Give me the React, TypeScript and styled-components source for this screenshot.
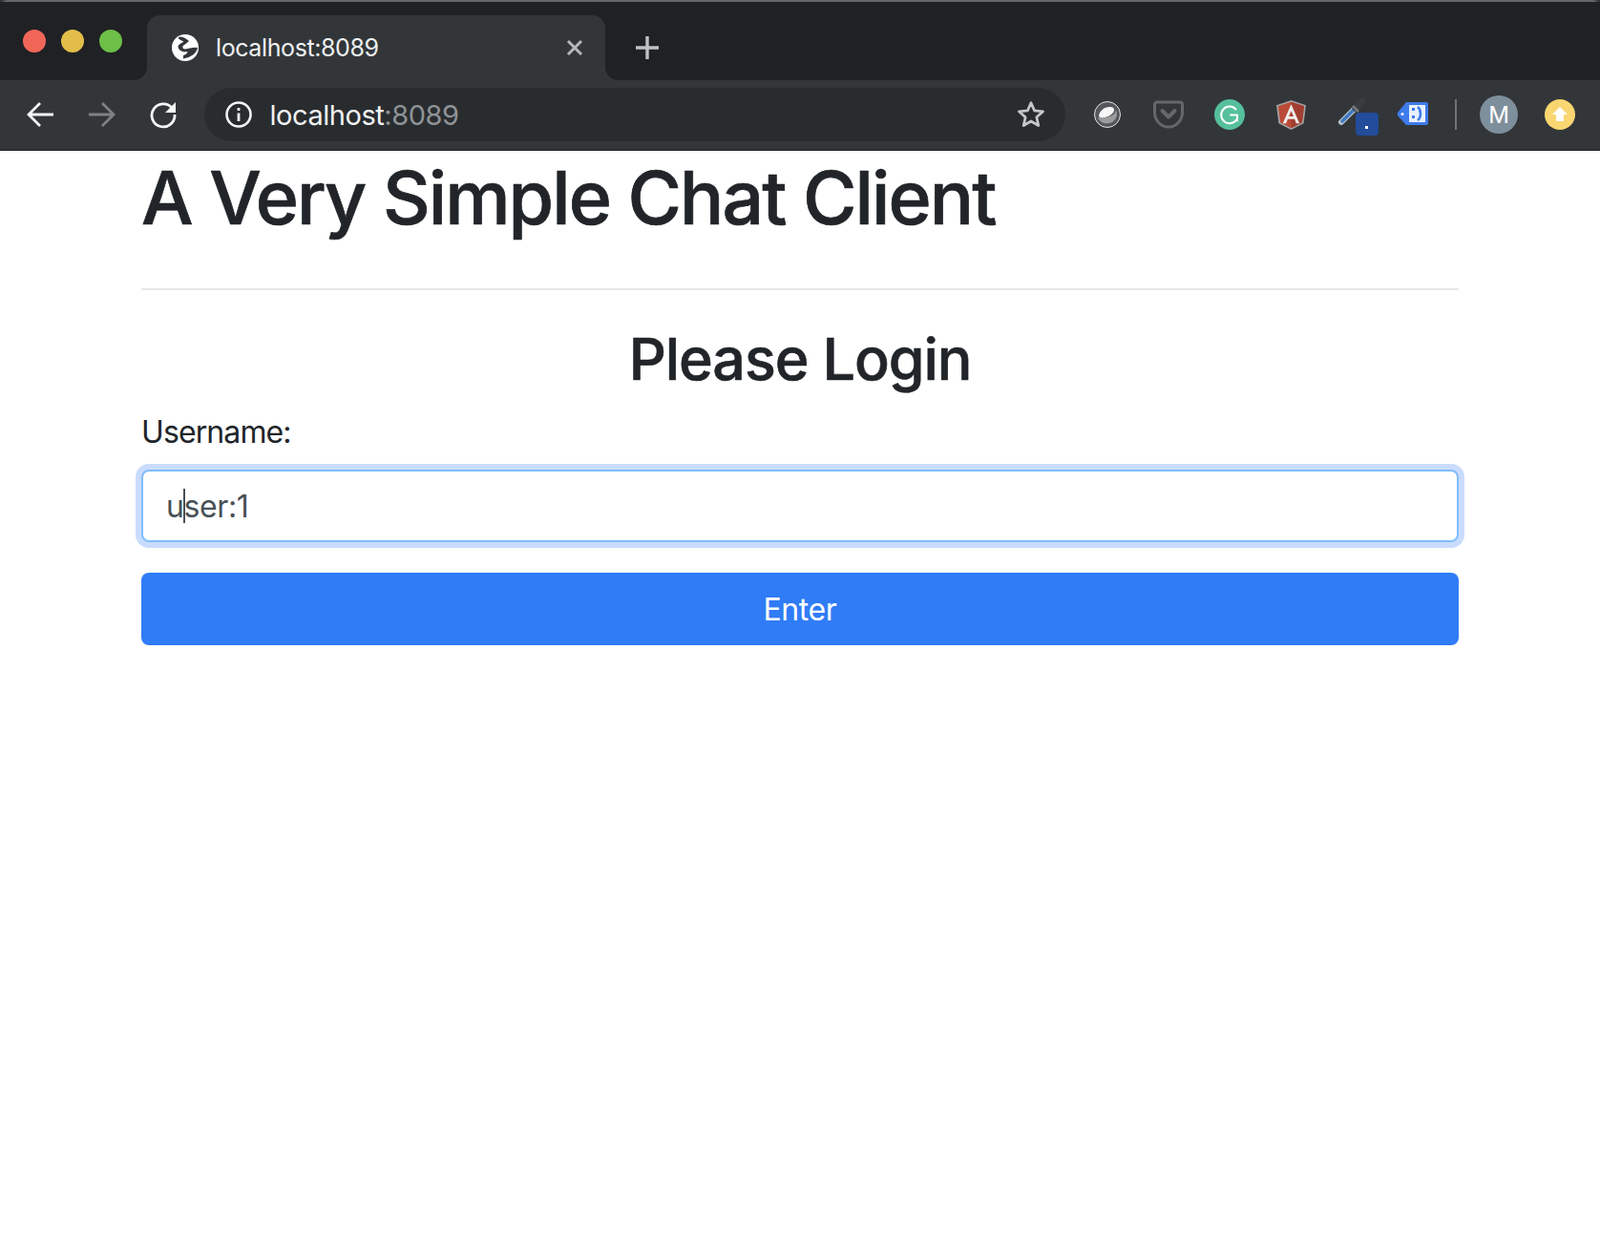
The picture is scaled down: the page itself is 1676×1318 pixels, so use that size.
import React from 'react'
import styled, { createGlobalStyle } from 'styled-components'

const GlobalStyle = createGlobalStyle`
  html, body {
    margin: 0;
    padding: 0;
    background: #ffffff;
  }
  * {
    box-sizing: border-box;
  }
`

const Window = styled.div`
  width: 1676px;
  height: 1318px;
  background: #fff;
  font-family: Inter, 'Noto Sans', sans-serif;
  overflow: hidden;
`

const Chrome = styled.header`
  height: 158px;
  background: #323639;
  border-bottom: 1px solid #1f2124;
`

const TabStrip = styled.div`
  display: flex;
  height: 84px;
  border-top: 2px solid #65676a;
  border-radius: 8px 8px 0 0;
  background: #323639;
`

const Lights = styled.div`
  width: 154px;
  display: flex;
  gap: 16px;
  padding: 29px 0 0 24px;
  background: #202124;
  border-bottom-right-radius: 14px;
`

const Light = styled.span<{ $color: string }>`
  width: 24px;
  height: 24px;
  border-radius: 50%;
  background: ${p => p.$color};
`

const TabSlot = styled.div`
  width: 480px;
  padding-top: 14px;
  background: #202124;
`

const Tab = styled.div`
  height: 68px;
  display: flex;
  align-items: center;
  padding: 0 22px 0 26px;
  background: #323639;
  border-radius: 14px 14px 0 0;
  color: #eef0f1;
  font-size: 25px;
`

const TabTitle = styled.span`
  flex: 1;
  margin-left: 18px;
  letter-spacing: -0.4px;
`

const StripRest = styled.div`
  flex: 1;
  padding: 35px 0 0 31px;
  background: #202124;
  border-bottom-left-radius: 14px;
`

const Toolbar = styled.div`
  height: 72px;
  display: flex;
  align-items: center;
  padding-left: 28px;
`

const NavIcon = styled.svg<{ $nudge?: number }>`
  width: 30px;
  height: 30px;
  margin-left: ${p => p.$nudge ?? 0}px;
  margin-right: ${p => 33 - (p.$nudge ?? 0)}px;
  flex: none;
`

const AddressBar = styled.div`
  width: 902px;
  height: 56px;
  margin-left: -3px;
  display: flex;
  align-items: center;
  padding: 0 20px 0 21px;
  background: #292c2f;
  border-radius: 28px;
  font-size: 29px;
  color: #f1f3f4;
`

const Url = styled.span`
  flex: 1;
  margin-left: 17.5px;
  letter-spacing: -0.45px;
`

const Port = styled.span`
  color: #8f9396;
`

const Extensions = styled.div`
  flex: 1;
  display: flex;
  align-items: center;
  padding-left: 12px;
`

const ExtSlot = styled.div`
  position: relative;
  width: 64px;
  height: 44px;
  display: flex;
  align-items: center;
  justify-content: center;
  flex: none;
`

const Badge = styled.span`
  position: absolute;
  left: 36px;
  top: 20px;
  width: 24px;
  height: 24px;
  border-radius: 4px;
  background: #234c9b;
  &::after {
    content: '';
    position: absolute;
    left: 10px;
    top: 14px;
    width: 3px;
    height: 3px;
    background: #fff;
  }
`

const Separator = styled.span`
  width: 2px;
  height: 32px;
  margin: 0 0 0 12px;
  background: #6f7275;
`

const Avatar = styled.div`
  width: 40px;
  height: 40px;
  margin-left: 24px;
  border-radius: 50%;
  background: #7e8f9c;
  color: #fff;
  font-size: 24px;
  display: flex;
  align-items: center;
  justify-content: center;
`

const UpdateDot = styled.div`
  width: 32px;
  height: 32px;
  margin-left: 28px;
  border-radius: 50%;
  background: #f9d671;
  display: flex;
  align-items: center;
  justify-content: center;
`

const Page = styled.main`
  width: 1380px;
  margin: 0 auto;
  color: #212529;
`

const Title = styled.h1`
  margin: 0;
  height: 144px;
  padding-top: 3px;
  font-size: 77px;
  line-height: 92px;
  font-weight: 500;
  letter-spacing: -1.95px;
  -webkit-text-stroke: 0.7px #212529;
`

const Rule = styled.hr`
  margin: 0;
  border: 0;
  border-top: 2px solid #e6e7e8;
`

const Subtitle = styled.h2`
  margin: 33px 0 0;
  text-align: center;
  font-size: 61px;
  line-height: 78px;
  font-weight: 500;
  letter-spacing: -1.1px;
  -webkit-text-stroke: 0.6px #212529;
`

const Label = styled.label`
  display: block;
  margin-top: 14px;
  font-size: 32px;
  line-height: 48px;
  letter-spacing: -0.9px;
`

const InputWrap = styled.div`
  position: relative;
  margin-top: 15px;
`

const TextInput = styled.input`
  display: block;
  width: 100%;
  height: 76px;
  padding: 0 24px;
  border: 2px solid #80bdff;
  border-radius: 8px;
  outline: 0;
  box-shadow: 0 0 0 6px #c9dcfd;
  background: #fff;
  color: #495057;
  font-family: inherit;
  font-size: 32px;
  letter-spacing: -0.4px;
`

const Caret = styled.span`
  position: absolute;
  left: 44px;
  top: 20px;
  width: 2px;
  height: 36px;
  background: #495057;
`

const SubmitButton = styled.button`
  display: block;
  width: 100%;
  height: 76px;
  margin-top: 32px;
  border: 0;
  border-radius: 8px;
  background: #307cf6;
  color: #fff;
  font-family: inherit;
  font-size: 32px;
  letter-spacing: -0.4px;
`

const GlobeIcon = () => (
  <svg width="28" height="28" viewBox="0 0 28 28" style={{ flex: 'none' }}>
    <circle cx="14" cy="14" r="14" fill="#fff" />
    <path d="M8 2.500C12 2.500 15 4.500 18 7l-3.500 3C11.500 11.500 10.500 13 12 15c4 1.500 8-2 15-1-1 6-7 10-15 11.500l0-3.500c3-1 4.500-2.500 4.500-4-4 1-9.500-.5-10-5 .5-3 4.500-4 6-5.500C11 7 8.500 6 6.500 4z" fill="#323639" />
  </svg>
)

const StarIcon = () => (
  <svg width="32" height="32" viewBox="0 0 30 30" fill="none" style={{ flex: 'none' }}>
    <path d="M15 3.500l3.400 7.700 8.400.8-6.300 5.600 1.800 8.200-7.300-4.300-7.300 4.300 1.800-8.200L3.200 12l8.400-.8z" stroke="#c4c7ca" strokeWidth="2.600" strokeLinejoin="round" />
  </svg>
)

const LensIcon = () => (
  <svg width="28" height="28" viewBox="0 0 28 28">
    <circle cx="14" cy="14" r="13.500" fill="#55575a" stroke="#e4e4e4" strokeWidth="1" />
    <path d="M4 17C6 23 13 25 19 22c5-3 6-9 4-13-1 5-5 9-19 8z" fill="#9b9c9e" />
    <path d="M5 16c0-5 5-10 12-10 4 0 5 3 3 6-3 4-11 7-15 4z" fill="#f6f6f6" />
  </svg>
)

const PocketIcon = () => (
  <svg width="32" height="30" viewBox="0 0 32 30" fill="none">
    <path d="M4 2h24a2.500 2.500 0 0 1 2.500 2.500V13c0 8.500-7 15-14.500 15S1.500 21.500 1.500 13V4.500A2.500 2.500 0 0 1 4 2z" stroke="#65686a" strokeWidth="3" />
    <path d="M9.500 11l6.500 6.500 6.500-6.500" stroke="#65686a" strokeWidth="4" strokeLinecap="round" strokeLinejoin="round" />
  </svg>
)

const GrammarlyIcon = () => (
  <svg width="32" height="32" viewBox="0 0 32 32" fill="none">
    <circle cx="16" cy="16" r="16" fill="#56bf9b" />
    <path d="M22.500 10.500A8.800 8.800 0 1 0 23.500 21" stroke="#fff" strokeWidth="2" strokeLinecap="round" />
    <path d="M17 16.500h7v6" stroke="#fff" strokeWidth="2" strokeLinecap="round" strokeLinejoin="round" />
  </svg>
)

const AngularIcon = () => (
  <svg width="31" height="31" viewBox="0 0 32 32">
    <path d="M16 0L32 5.500 29.500 25 16 32 2.500 25 0 5.500z" fill="#a2a2a2" />
    <path d="M16 1.800L30 6.500 27.800 24 16 30.200 4.200 24 2 6.500z" fill="#bb4a38" />
    <path d="M16 1.800L30 6.500 27.800 24 16 30.200z" fill="#a13e31" />
    <path d="M16 4.500L7 25h3.500l1.800-4.600h7.400L21.500 25H25zm-2.500 13L16 11.500l2.500 6z" fill="#eeeeee" />
  </svg>
)

const DropperIcon = () => (
  <svg width="30" height="29" viewBox="0 0 30 29" fill="none" style={{ marginLeft: 0, marginTop: -5 }}>
    <path d="M18 11L4 25" stroke="#b9c0c6" strokeWidth="6" strokeLinecap="round" />
    <path d="M17 12L5 24" stroke="#3f78c4" strokeWidth="3.400" strokeLinecap="round" />
    <path d="M19 10L26 3" stroke="#3a3d40" strokeWidth="7" strokeLinecap="round" />
    <path d="M16 8l6 6" stroke="#77797c" strokeWidth="2.500" />
  </svg>
)

const TagIcon = () => (
  <svg width="32" height="24" viewBox="0 0 32 24" style={{ marginTop: -3 }}>
    <path d="M9 0h21a2 2 0 0 1 2 2v20a2 2 0 0 1-2 2H9L0 14v-3z" fill="#3d7bea" />
    <rect x="12" y="3" width="17" height="18" fill="#e8f0fe" />
    <circle cx="5" cy="12.500" r="1.500" fill="#fff" />
    <rect x="15" y="6" width="3" height="3" fill="#3d7bea" />
    <rect x="15" y="14" width="3" height="3" fill="#3d7bea" />
    <path d="M21 5c4 3 4 11 0 14" stroke="#3d7bea" strokeWidth="2.500" fill="none" />
  </svg>
)

const App = () => (
  <Window>
    <GlobalStyle />
    <Chrome>
      <TabStrip>
        <Lights>
          <Light $color="#f2665a" />
          <Light $color="#e2bd4a" />
          <Light $color="#6cbf47" />
        </Lights>
        <TabSlot>
          <Tab>
            <GlobeIcon />
            <TabTitle>localhost:8089</TabTitle>
            <svg width="20" height="20" viewBox="0 0 20 20" fill="none">
              <path d="M3 3l14 14M17 3L3 17" stroke="#b5b8ba" strokeWidth="3" />
            </svg>
          </Tab>
        </TabSlot>
        <StripRest>
          <svg width="26" height="26" viewBox="0 0 26 26" fill="none">
            <path d="M13 1v24M1 13h24" stroke="#bfc2c5" strokeWidth="3.400" />
          </svg>
        </StripRest>
      </TabStrip>
      <Toolbar>
        <NavIcon viewBox="0 0 30 30" fill="none">
          <path d="M28 15H3M14 3L2 15l12 12" stroke="#f5f6f6" strokeWidth="2.800" />
        </NavIcon>
        <NavIcon viewBox="0 0 30 30" fill="none">
          <path d="M2 15h25M16 3l12 12-12 12" stroke="#7e8285" strokeWidth="2.800" />
        </NavIcon>
        <NavIcon $nudge={2} viewBox="0 0 30 30" fill="none">
          <path d="M24.500 8.500A12 12 0 1 0 27 15" stroke="#f5f6f6" strokeWidth="2.800" />
          <path d="M28 2v11H17z" fill="#f5f6f6" />
        </NavIcon>
        <AddressBar>
          <svg width="30" height="30" viewBox="0 0 30 30" fill="none" style={{ flex: 'none' }}>
            <circle cx="15" cy="15" r="12.500" stroke="#f1f3f4" strokeWidth="2.600" />
            <path d="M15 13.500V22" stroke="#f1f3f4" strokeWidth="2.800" />
            <path d="M15 8v3" stroke="#f1f3f4" strokeWidth="2.800" />
          </svg>
          <Url>
            localhost<Port>:8089</Port>
          </Url>
          <StarIcon />
        </AddressBar>
        <Extensions>
          <ExtSlot><LensIcon /></ExtSlot>
          <ExtSlot><PocketIcon /></ExtSlot>
          <ExtSlot><GrammarlyIcon /></ExtSlot>
          <ExtSlot><AngularIcon /></ExtSlot>
          <ExtSlot>
            <DropperIcon />
            <Badge />
          </ExtSlot>
          <ExtSlot><TagIcon /></ExtSlot>
          <Separator />
          <Avatar>M</Avatar>
          <UpdateDot>
            <svg width="18" height="18" viewBox="0 0 18 18">
              <path d="M9 1l8 8h-4v7H5V9H1z" fill="#fff" />
            </svg>
          </UpdateDot>
        </Extensions>
      </Toolbar>
    </Chrome>
    <Page>
      <Title>A Very Simple Chat Client</Title>
      <Rule />
      <Subtitle>Please Login</Subtitle>
      <Label htmlFor="username">Username:</Label>
      <InputWrap>
        <TextInput id="username" defaultValue="user:1" readOnly />
        <Caret />
      </InputWrap>
      <SubmitButton>Enter</SubmitButton>
    </Page>
  </Window>
)

export default App
